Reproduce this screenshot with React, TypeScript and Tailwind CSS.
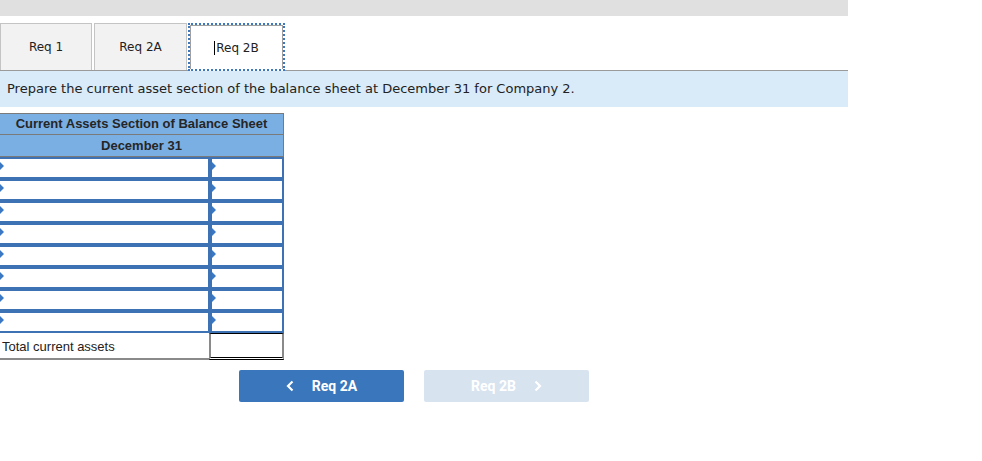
import React from 'react';

const Marker = () => (
  <span className="absolute left-0 top-[3px] w-0 h-0 border-y-[4px] border-y-transparent border-l-[4px] border-l-[#3b78c4]" />
);

const InputRow = () => (
  <div className="flex h-[22px]">
    <div className="relative w-[210px] border-2 border-[#3d72b5] border-l-0 bg-white">
      <Marker />
    </div>
    <div className="relative w-[74px] border-2 border-[#3d72b5] bg-white">
      <Marker />
    </div>
  </div>
);

export default function App() {
  const rows = Array.from({ length: 8 }, (_, i) => i);
  return (
    <div className="w-[982px] h-[461px] bg-white font-['DejaVu_Sans',Verdana,sans-serif]">
      <div className="w-[848px]">
        <div className="h-4 bg-[#e0e0e0]" />
        {/* tabs */}
        <div className="flex items-end h-[55px] border-b border-[#9a9a9a] text-[12px] text-[#222]">
          <div className="w-[92px] h-[47px] flex items-center justify-center bg-[#f2f2f2] border border-b-0 border-[#c4c4c4]">Req 1</div>
          <div className="w-[93px] h-[47px] ml-[2px] flex items-center justify-center bg-[#f2f2f2] border border-b-0 border-[#c4c4c4]">Req 2A</div>
          <div className="w-[97px] h-[48px] ml-[1px] -mb-px border-2 border-dotted border-[#3c78c0] bg-white">
            <div className="h-full flex items-center justify-center border border-b-0 border-[#a0a0a0]">
              <span className="border-l border-black pl-px leading-[14px]">Req 2B</span>
            </div>
          </div>
        </div>
        <div className="h-[36px] bg-[#d9eaf8] flex items-center pl-[7px] text-[13px] text-[#222]">
          Prepare the current asset section of the balance sheet at December 31 for Company 2.
        </div>
      </div>

      {/* table */}
      <div className="mt-[6px] w-[284px] font-['Liberation_Sans',Arial,sans-serif] text-[13px] text-[#222]">
        <div className="h-[22px] bg-[#7aafe4] border border-l-0 border-[#7a7a7a] flex items-center justify-center font-bold text-[#262626]">
          Current Assets Section of Balance Sheet
        </div>
        <div className="h-[22px] bg-[#7aafe4] border-r border-b border-[#7a7a7a] flex items-center justify-center font-bold text-[#262626]">
          December 31
        </div>
        {rows.map((r) => (
          <InputRow key={r} />
        ))}
        <div className="flex h-[27px]">
          <div className="w-[209px] border-b-2 border-[#8a8a8a] flex items-center pl-[2px] pt-[2px]">Total current assets</div>
          <div className="w-[75px] border-t border-t-black border-x-2 border-x-[#8a8a8a] border-b-[3px] border-b-black border-double" />
        </div>
      </div>

      {/* nav buttons */}
      <div className="flex mt-[10px] ml-[239px] gap-5 font-['Roboto',sans-serif] text-[14px] font-bold text-white">
        <div className="w-[165px] h-[32px] rounded-[2px] bg-[#3a76bb] flex items-center justify-center gap-[18px]">
          <svg width="8" height="12" viewBox="0 0 8 12"><path d="M6.5 1.5 L2 6 L6.5 10.5" stroke="white" strokeWidth="2.2" fill="none" /></svg>
          <span>Req 2A</span>
        </div>
        <div className="w-[165px] h-[32px] rounded-[2px] bg-[#d8e3f0] flex items-center justify-center gap-[18px]">
          <span>Req 2B</span>
          <svg width="8" height="12" viewBox="0 0 8 12"><path d="M1.5 1.5 L6 6 L1.5 10.5" stroke="white" strokeWidth="2.2" fill="none" /></svg>
        </div>
      </div>
    </div>
  );
}
